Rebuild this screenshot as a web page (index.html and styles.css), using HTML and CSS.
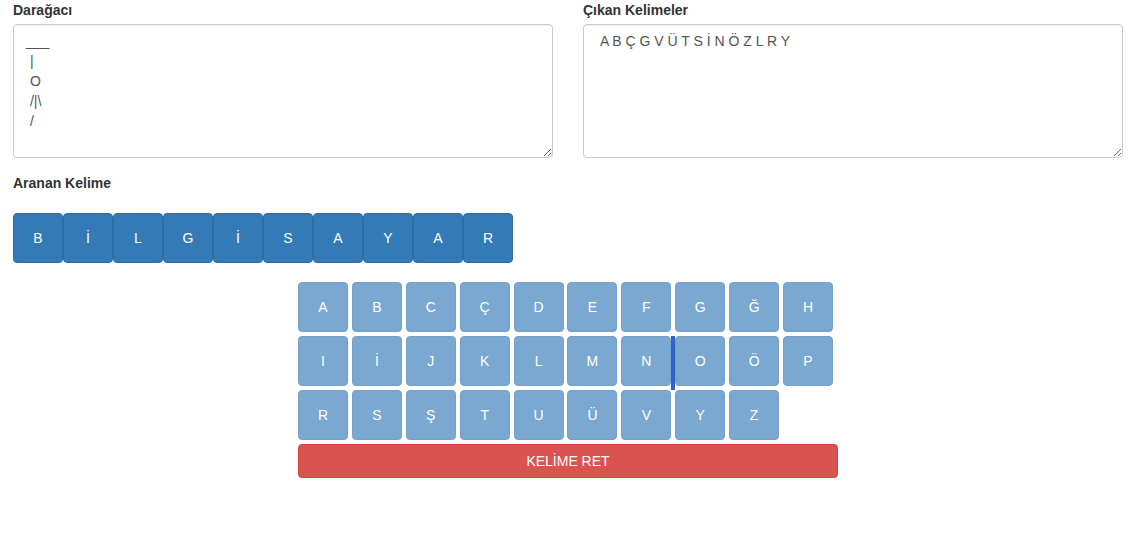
FILE: index.html
```html
<!DOCTYPE html>
<html lang="tr">

<head>
    <meta charset="UTF-8">
    <meta name="viewport" content="width=device-width, initial-scale=1.0">
    <link rel="stylesheet" href="styles.css">
    <title>Adam Asmaca</title>
</head>

<body>
    <div class="page">
        <div class="row">
            <div class="form-group">
                <label for="gallows">Darağacı</label>
                <textarea id="gallows" class="form-control" readonly>
___
 |
 O
 /|\
 /</textarea>
            </div>
            <div class="form-group">
                <label for="used">Çıkan Kelimeler</label>
                <textarea id="used" class="form-control" readonly> A B Ç G V Ü T S İ N Ö Z L R Y</textarea>
            </div>
        </div>

        <div class="form-group">
            <label>Aranan Kelime</label>
            <div class="word">
                <span class="word-letter">B</span>
                <span class="word-letter">İ</span>
                <span class="word-letter">L</span>
                <span class="word-letter">G</span>
                <span class="word-letter">İ</span>
                <span class="word-letter">S</span>
                <span class="word-letter">A</span>
                <span class="word-letter">Y</span>
                <span class="word-letter">A</span>
                <span class="word-letter">R</span>
            </div>
        </div>

        <div class="keyboard">
            <div class="keys">
                <button class="key" disabled>A</button>
                <button class="key" disabled>B</button>
                <button class="key" disabled>C</button>
                <button class="key" disabled>Ç</button>
                <button class="key" disabled>D</button>
                <button class="key" disabled>E</button>
                <button class="key" disabled>F</button>
                <button class="key" disabled>G</button>
                <button class="key" disabled>Ğ</button>
                <button class="key" disabled>H</button>
                <button class="key" disabled>I</button>
                <button class="key" disabled>İ</button>
                <button class="key" disabled>J</button>
                <button class="key" disabled>K</button>
                <button class="key" disabled>L</button>
                <button class="key" disabled>M</button>
                <button class="key" disabled>N</button>
                <button class="key" disabled>O</button>
                <button class="key" disabled>Ö</button>
                <button class="key" disabled>P</button>
                <button class="key" disabled>R</button>
                <button class="key" disabled>S</button>
                <button class="key" disabled>Ş</button>
                <button class="key" disabled>T</button>
                <button class="key" disabled>U</button>
                <button class="key" disabled>Ü</button>
                <button class="key" disabled>V</button>
                <button class="key" disabled>Y</button>
                <button class="key" disabled>Z</button>
                <span class="caret"></span>
            </div>
            <button class="btn-danger">KELİME RET</button>
        </div>
    </div>
</body>

</html>
```

FILE: styles.css
```css
/* Global */
body {
    font-family: "Liberation Sans", Arial, sans-serif;
    font-size: 14px;
    line-height: 20px;
    color: #333;
    margin: 0;
    background-color: #fff;
}

.page {
    padding: 0 21px 0 13px;
}

/* Form */
.row {
    display: flex;
    gap: 30px;
}

.row .form-group {
    flex: 1;
}

.form-group {
    margin-bottom: 15px;
}

label {
    display: block;
    font-weight: bold;
    margin-bottom: 4px;
}

.form-control {
    display: block;
    box-sizing: border-box;
    width: 100%;
    height: 134px;
    margin: 0;
    padding: 6px 12px;
    font-family: inherit;
    font-size: 14px;
    line-height: 20px;
    color: #555;
    background-color: #fff;
    border: 1px solid #ccc;
    border-radius: 4px;
    box-shadow: inset 0 1px 1px rgba(0, 0, 0, 0.075);
    outline: none;
}

/* Searched word */
.word {
    display: flex;
    margin-top: 20px;
}

.word-letter {
    box-sizing: border-box;
    width: 50px;
    height: 50px;
    display: flex;
    align-items: center;
    justify-content: center;
    color: #fff;
    background-color: #337ab7;
    border: 1px solid #2e6da4;
    border-radius: 4px;
}

/* Keyboard */
.keyboard {
    width: 540px;
    margin: 19px auto 0;
}

.keys {
    position: relative;
    display: flex;
    flex-wrap: wrap;
    column-gap: 3.9px;
    row-gap: 4px;
}

/* disabled look: #337ab7 at 65% on white */
.key {
    box-sizing: border-box;
    width: 50px;
    height: 50px;
    padding: 0;
    font-family: inherit;
    font-size: 14px;
    color: #fff;
    background-color: #7aa8d0;
    border: 1px solid #77a0c4;
    border-radius: 4px;
}

/* drag marker between N and O */
.caret {
    position: absolute;
    left: 373px;
    top: 54px;
    width: 4px;
    height: 54px;
    background-color: #3463c6;
}

.btn-danger {
    display: block;
    box-sizing: border-box;
    width: 100%;
    height: 34px;
    margin-top: 4px;
    font-family: inherit;
    font-size: 14px;
    color: #fff;
    background-color: #d9534f;
    border: 1px solid #d43f3a;
    border-radius: 4px;
}
```
